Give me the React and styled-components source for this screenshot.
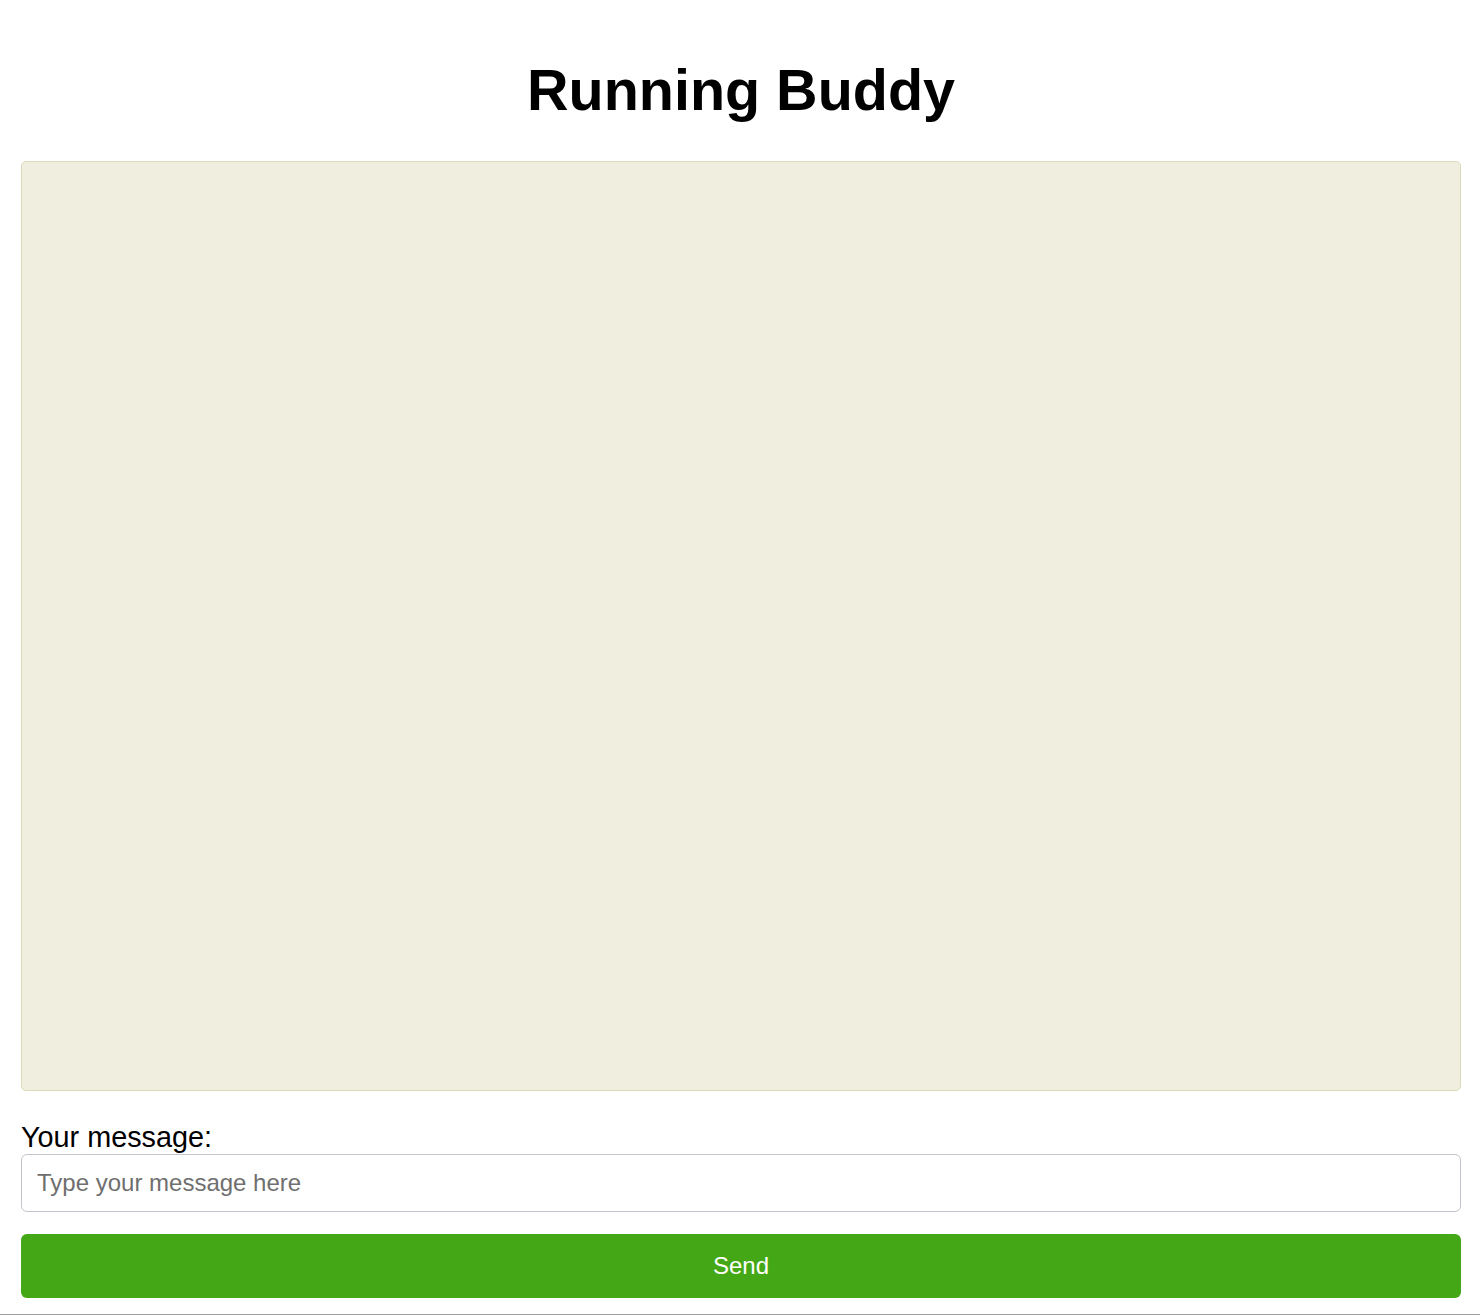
import React, { useState } from "react";
import styled, { createGlobalStyle } from "styled-components";

const GlobalStyle = createGlobalStyle`
  html, body {
    margin: 0;
    padding: 0;
    background: #ffffff;
    font-family: "Liberation Sans", Arial, Helvetica, sans-serif;
  }
  * { box-sizing: border-box; }
`;

const Page = styled.div`
  display: flex;
  flex-direction: column;
  padding: 20px 19px 0 21px;
  height: 1315px;
  border-bottom: 1px solid #a0a0a0;
`;

const Title = styled.h1`
  margin: 37px 0 38px;
  font-size: 57.5px;
  line-height: 66px;
  font-weight: 700;
  text-align: center;
  color: #000;
`;

const ChatBox = styled.div`
  height: 930px;
  background: #f0efdf;
  border: 1px solid #dcdbb8;
  border-radius: 5px;
  overflow-y: auto;
`;

const Form = styled.form`
  display: flex;
  flex-direction: column;
  margin-top: 30px;
`;

const Label = styled.label`
  font-size: 28.8px;
  line-height: 32px;
  color: #000;
  margin-bottom: 1px;
`;

const Input = styled.input`
  width: 100%;
  height: 58px;
  padding: 0 15px;
  font-family: inherit;
  font-size: 24px;
  color: #000;
  background: #fff;
  border: 1px solid #c4c4cc;
  border-radius: 6px;
  outline: none;
  &::placeholder {
    color: #6f6f6f;
  }
`;

const SendButton = styled.button`
  margin-top: 22px;
  width: 100%;
  height: 64px;
  font-family: inherit;
  font-size: 24px;
  color: #fff;
  background: #44a816;
  border: none;
  border-radius: 6px;
  cursor: pointer;
`;

export default function App() {
  const [msg, setMsg] = useState("");
  return (
    <>
      <GlobalStyle />
      <Page>
        <Title>Running Buddy</Title>
        <ChatBox />
        <Form onSubmit={(e) => e.preventDefault()}>
          <Label htmlFor="msg">Your message:</Label>
          <Input
            id="msg"
            value={msg}
            onChange={(e) => setMsg(e.target.value)}
            placeholder="Type your message here"
          />
          <SendButton type="submit">Send</SendButton>
        </Form>
      </Page>
    </>
  );
}
